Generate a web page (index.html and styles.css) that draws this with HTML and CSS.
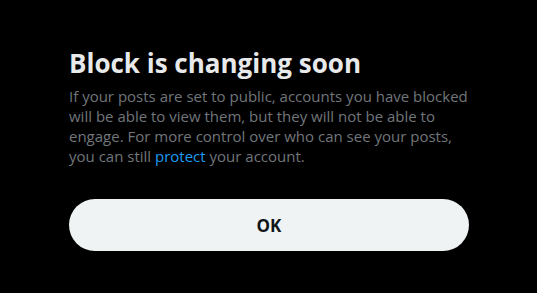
FILE: index.html
```html
<!DOCTYPE html>
<html>
<head>
<meta charset="utf-8">
<link rel="stylesheet" href="styles.css">
</head>
<body>
<div class="dialog">
  <h1 class="title">Block is changing soon</h1>
  <p class="text">If your posts are set to public, accounts you have blocked will be able to view them, but they will not be able to engage. For more control over who can see your posts, you can still <a class="link" href="#">protect</a> your account.</p>
  <button class="ok">OK</button>
</div>
</body>
</html>
```
FILE: styles.css
```css
html, body { margin: 0; background: #000; }
body { font-family: "Open Sans", sans-serif; width: 537px; height: 293px; overflow: hidden; }
.dialog { padding: 47px 68px 0 69px; display: flex; flex-direction: column; }
.title { margin: 0; font-size: 26px; line-height: 32px; font-weight: 700; color: #e7e9ea; }
.text { margin: 7px 0 0; font-size: 15px; line-height: 20px; color: #71767b; }
.link { color: #1d9bf0; text-decoration: none; }
.ok { margin-top: 33px; height: 52px; width: 400px; border: 0; border-radius: 26px; background: #eff3f4; color: #0f1419; font-family: inherit; font-size: 17px; font-weight: 700; }
```
